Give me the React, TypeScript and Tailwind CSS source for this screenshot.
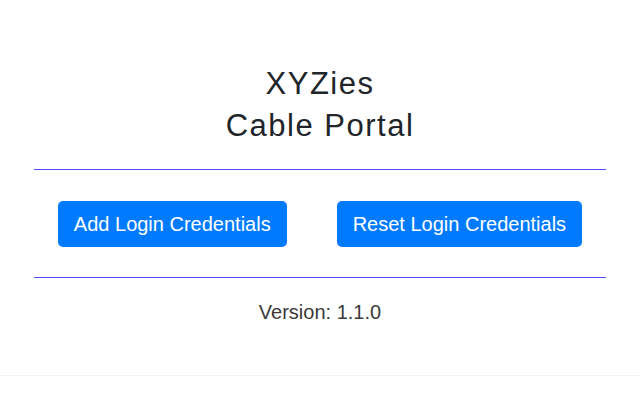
export default function App() {
  return (
    <div
      className="flex h-[400px] w-[640px] flex-col bg-white text-[#212529]"
      style={{ fontFamily: '"Liberation Sans", Arial, sans-serif' }}
    >
      <div className="flex h-[376px] flex-col items-center border-b border-[#f4f4f4] pt-[63px]">
        <h1 className="text-center text-[31px] font-normal leading-[42px] tracking-[1.5px]">
          XYZies
          <br />
          Cable Portal
        </h1>

        <div className="mt-[22px] h-px w-[572px] bg-[#4d4dff]" />

        <div className="mt-[31px] flex gap-[50px]">
          <button
            type="button"
            className="rounded-[5px] bg-[#007bff] px-4 py-2 text-[20px] leading-[30px] text-white"
          >
            Add Login Credentials
          </button>
          <button
            type="button"
            className="rounded-[5px] bg-[#007bff] px-4 py-2 text-[20px] leading-[30px] text-white"
          >
            Reset Login Credentials
          </button>
        </div>

        <div className="mt-[30px] h-px w-[572px] bg-[#4d4dff]" />

        <p className="mt-[19px] text-[20px] leading-[30px] text-[#3a3a3a]">Version: 1.1.0</p>
      </div>
    </div>
  );
}
